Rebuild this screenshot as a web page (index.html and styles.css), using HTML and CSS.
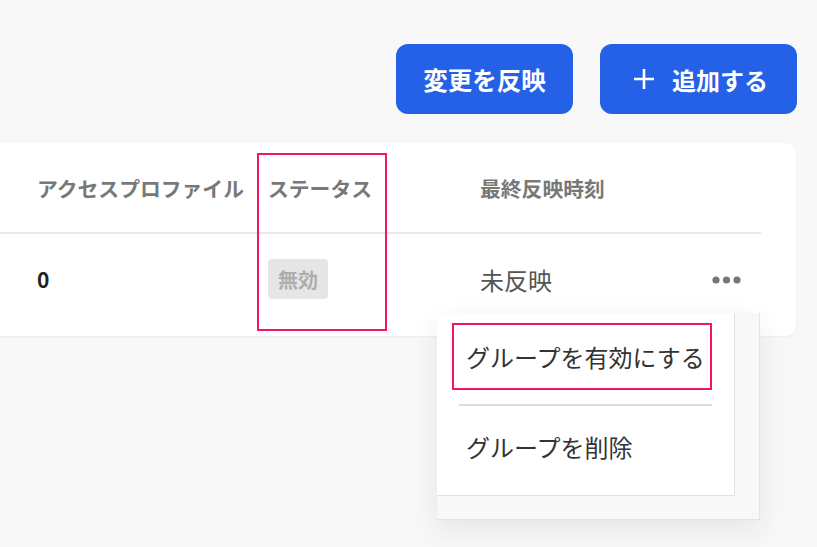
FILE: index.html
```html
<!DOCTYPE html>
<html lang="ja">
<head>
<meta charset="utf-8">
<link rel="stylesheet" href="styles.css">
</head>
<body>
<div class="page">
  <div class="toolbar">
    <button class="btn">変更を反映</button>
    <button class="btn btn-add">
      <svg class="plus" width="22" height="22" viewBox="0 0 22 22"><path d="M11 1V21M1 11H21" stroke="#fff" stroke-width="2.6" fill="none"/></svg>
      <span>追加する</span>
    </button>
  </div>

  <div class="card">
    <div class="row head">
      <div>アクセスプロファイル</div>
      <div>ステータス</div>
      <div>最終反映時刻</div>
      <div></div>
    </div>
    <div class="row body">
      <div class="num">0</div>
      <div><span class="badge">無効</span></div>
      <div class="time">未反映</div>
      <div class="more">
        <svg width="29" height="8" viewBox="0 0 29 8"><circle cx="4" cy="4" r="3.6" fill="#777"/><circle cx="14.5" cy="4" r="3.6" fill="#777"/><circle cx="25" cy="4" r="3.6" fill="#777"/></svg>
      </div>
    </div>
  </div>

  <div class="mark mark-status"></div>

  <div class="menu">
    <div class="menu-panel">
      <div class="menu-item marked">グループを有効にする</div>
      <div class="menu-sep"></div>
      <div class="menu-item">グループを削除</div>
    </div>
  </div>
</div>
</body>
</html>
```
FILE: styles.css
```css
html, body {
  margin: 0;
  padding: 0;
  background: #f8f8f9;
  font-family: "Noto Sans CJK JP", "Noto Sans", sans-serif;
  overflow: hidden;
}

.page {
  position: relative;
  width: 817px;
  height: 547px;
}

.toolbar {
  display: flex;
  justify-content: flex-end;
  gap: 27px;
  padding: 44px 20px 0 0;
}

.btn {
  box-sizing: border-box;
  height: 70px;
  border: none;
  border-radius: 12px;
  background: #2461e6;
  color: #fff;
  font-family: inherit;
  font-weight: 700;
  font-size: 24.5px;
  padding: 0;
  display: flex;
  align-items: center;
  justify-content: center;
  width: 177px;
  white-space: nowrap;
}

.btn-add {
  width: 197px;
  gap: 17px;
  font-size: 24px;
  padding: 0 0 0 33px;
  justify-content: flex-start;
}

.plus { display: block; flex-shrink: 0; }

.card {
  margin: 29px 21px 0 -16px;
  background: #fff;
  border-radius: 10px;
  box-shadow: 0 1px 3px rgba(0, 0, 0, 0.05);
  padding: 0 35px 12px 0;
}

.row {
  display: grid;
  grid-template-columns: 231px 212px 232px 1fr;
  align-items: center;
  padding-left: 53px;
}

.head {
  height: 89px;
  border-bottom: 2px solid #e8e8e8;
  font-size: 20.8px;
  font-weight: 700;
  color: #787878;
  white-space: nowrap;
}

.body {
  height: 90px;
}

.num {
  font-size: 21px;
  font-weight: 700;
  color: #222;
}

.badge {
  display: inline-flex;
  align-items: center;
  justify-content: center;
  width: 60px;
  height: 40px;
  border-radius: 4px;
  background: #e6e6e6;
  color: #adadad;
  font-size: 20px;
  font-weight: 700;
}

.time {
  font-size: 24px;
  color: #555;
}

.more svg { display: block; margin-top: 1px; }

.mark {
  position: absolute;
  border: 2px solid #f5165a;
  box-sizing: border-box;
}

.mark-status {
  left: 257px;
  top: 153px;
  width: 130px;
  height: 178px;
}

.menu {
  position: absolute;
  left: 437px;
  top: 313px;
  width: 323px;
  height: 207px;
  box-sizing: border-box;
  background: #f8f8f8;
  border-right: 1px solid #e4e4e4;
  border-bottom: 1px solid #e4e4e4;
  border-top-left-radius: 8px;
  box-shadow: 0 10px 28px rgba(40, 40, 60, 0.09);
}

.menu-panel {
  width: 298px;
  height: 183px;
  box-sizing: border-box;
  background: #fff;
  border-right: 1px solid #e2e2e2;
  border-bottom: 1px solid #e2e2e2;
  border-top-left-radius: 8px;
  padding: 10px 22px 0 15px;
}

.menu-item {
  display: flex;
  align-items: center;
  font-size: 24px;
  color: #333;
  padding-left: 14px;
  height: 80px;
  white-space: nowrap;
}

.menu-item.marked {
  height: 67px;
  border: 2px solid #f5165a;
  padding-left: 12px;
  box-sizing: border-box;
}

.menu-sep {
  height: 2px;
  background: #dcdcdc;
  margin: 14px 0 0 7px;
}
```
